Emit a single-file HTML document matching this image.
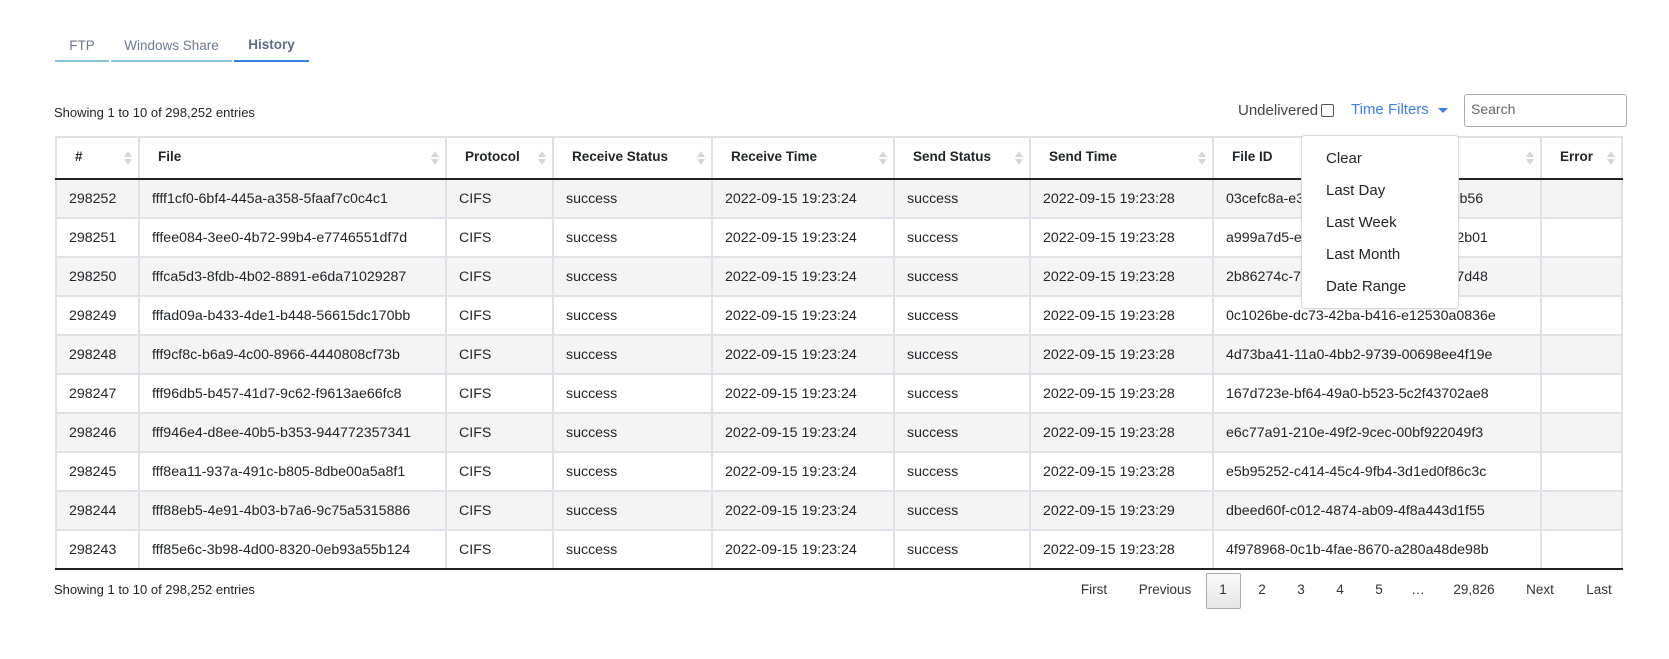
<!DOCTYPE html>
<html><head><meta charset="utf-8"><style>
*{box-sizing:border-box;margin:0;padding:0}
body{width:1669px;height:659px;background:#fff;font-family:"Liberation Sans",sans-serif;color:#212529;position:relative;overflow:hidden;font-size:13.5px}
.a{position:absolute;white-space:nowrap}
.tab{position:absolute;top:34px;height:28px;font-size:13.5px;color:#6c7a93;text-align:center;border-bottom:2px solid #86c1d8}
table{position:absolute;left:55px;top:136px;border-collapse:collapse;width:1566px;table-layout:fixed}
td,th{border:2px solid #dee2e6;height:39px;padding:0 0 0 12px;text-align:left;font-size:14.2px;white-space:nowrap;overflow:hidden}
th{height:42px;font-size:13.5px;font-weight:bold;border-bottom:2px solid #222;position:relative;padding-left:18px;padding-bottom:4px}
tbody tr:nth-child(odd) td{background:#f4f4f4}
.s{position:absolute;right:6px;top:13px;width:8px;height:16px}
.s:before{content:"";position:absolute;left:0;top:0;border-left:4px solid transparent;border-right:4px solid transparent;border-bottom:6px solid #d6d6d6}
.s:after{content:"";position:absolute;left:0;top:8px;border-left:4px solid transparent;border-right:4px solid transparent;border-top:6px solid #d6d6d6}
.dd{position:absolute;left:1301px;top:135px;width:158px;height:174px;background:#fff;border:1px solid #d8d8d8;border-radius:4px;box-shadow:0 1px 3px rgba(0,0,0,.08)}
.dd div{position:absolute;left:24px;font-size:15px;color:#212529}
.pg{position:absolute;top:582px;font-size:13.5px;color:#333;transform:translateX(-50%)}
</style></head><body>
<div class="tab" style="left:55px;width:54px;line-height:24px">FTP</div>
<div class="tab" style="left:111px;width:121px;line-height:24px">Windows Share</div>
<div class="tab" style="left:234px;width:75px;line-height:22px;font-weight:bold;color:#5e6c85;border-bottom-color:#3a7ee8">History</div>

<div class="a" style="left:54px;top:105px;font-size:13px">Showing 1 to 10 of 298,252 entries</div>
<div class="a" style="left:1238px;top:102px;font-size:15px;color:#444">Undelivered</div>
<div class="a" style="left:1321px;top:104px;width:13px;height:13px;border:1px solid #555;border-radius:2px"></div>
<div class="a" style="left:1351px;top:101px;font-size:15px;color:#3b7ff0">Time Filters</div>
<div class="a" style="left:1438px;top:108px;border-left:5px solid transparent;border-right:5px solid transparent;border-top:5px solid #3b7ff0"></div>
<div class="a" style="left:1464px;top:94px;width:163px;height:33px;border:1px solid #aaa;border-radius:3px;padding:6px 6px;font-size:14px;color:#666">Search</div>

<table>
<colgroup><col style="width:83px"><col style="width:307px"><col style="width:107px"><col style="width:159px"><col style="width:182px"><col style="width:136px"><col style="width:183px"><col style="width:328px"><col style="width:81px"></colgroup>
<thead><tr>
<th>#<span class="s"></span></th><th>File<span class="s"></span></th><th>Protocol<span class="s"></span></th><th>Receive Status<span class="s"></span></th><th>Receive Time<span class="s"></span></th><th>Send Status<span class="s"></span></th><th>Send Time<span class="s"></span></th><th>File ID<span class="s"></span></th><th>Error<span class="s"></span></th>
</tr></thead>
<tbody>
<tr><td>298252</td><td>ffff1cf0-6bf4-445a-a358-5faaf7c0c4c1</td><td>CIFS</td><td>success</td><td>2022-09-15 19:23:24</td><td>success</td><td>2022-09-15 19:23:28</td><td>03cefc8a-e3f1-4b2e-9d61-8e1c2a7f4b56</td><td></td></tr>
<tr><td>298251</td><td>fffee084-3ee0-4b72-99b4-e7746551df7d</td><td>CIFS</td><td>success</td><td>2022-09-15 19:23:24</td><td>success</td><td>2022-09-15 19:23:28</td><td>a999a7d5-ef2c-4a10-8c3b-7d4e1f9a2b01</td><td></td></tr>
<tr><td>298250</td><td>fffca5d3-8fdb-4b02-8891-e6da71029287</td><td>CIFS</td><td>success</td><td>2022-09-15 19:23:24</td><td>success</td><td>2022-09-15 19:23:28</td><td>2b86274c-70a1-4e8f-b2c6-5f3d9e1a7d48</td><td></td></tr>
<tr><td>298249</td><td>fffad09a-b433-4de1-b448-56615dc170bb</td><td>CIFS</td><td>success</td><td>2022-09-15 19:23:24</td><td>success</td><td>2022-09-15 19:23:28</td><td>0c1026be-dc73-42ba-b416-e12530a0836e</td><td></td></tr>
<tr><td>298248</td><td>fff9cf8c-b6a9-4c00-8966-4440808cf73b</td><td>CIFS</td><td>success</td><td>2022-09-15 19:23:24</td><td>success</td><td>2022-09-15 19:23:28</td><td>4d73ba41-11a0-4bb2-9739-00698ee4f19e</td><td></td></tr>
<tr><td>298247</td><td>fff96db5-b457-41d7-9c62-f9613ae66fc8</td><td>CIFS</td><td>success</td><td>2022-09-15 19:23:24</td><td>success</td><td>2022-09-15 19:23:28</td><td>167d723e-bf64-49a0-b523-5c2f43702ae8</td><td></td></tr>
<tr><td>298246</td><td>fff946e4-d8ee-40b5-b353-944772357341</td><td>CIFS</td><td>success</td><td>2022-09-15 19:23:24</td><td>success</td><td>2022-09-15 19:23:28</td><td>e6c77a91-210e-49f2-9cec-00bf922049f3</td><td></td></tr>
<tr><td>298245</td><td>fff8ea11-937a-491c-b805-8dbe00a5a8f1</td><td>CIFS</td><td>success</td><td>2022-09-15 19:23:24</td><td>success</td><td>2022-09-15 19:23:28</td><td>e5b95252-c414-45c4-9fb4-3d1ed0f86c3c</td><td></td></tr>
<tr><td>298244</td><td>fff88eb5-4e91-4b03-b7a6-9c75a5315886</td><td>CIFS</td><td>success</td><td>2022-09-15 19:23:24</td><td>success</td><td>2022-09-15 19:23:29</td><td>dbeed60f-c012-4874-ab09-4f8a443d1f55</td><td></td></tr>
<tr><td style="border-bottom:2px solid #222">298243</td><td style="border-bottom:2px solid #222">fff85e6c-3b98-4d00-8320-0eb93a55b124</td><td style="border-bottom:2px solid #222">CIFS</td><td style="border-bottom:2px solid #222">success</td><td style="border-bottom:2px solid #222">2022-09-15 19:23:24</td><td style="border-bottom:2px solid #222">success</td><td style="border-bottom:2px solid #222">2022-09-15 19:23:28</td><td style="border-bottom:2px solid #222">4f978968-0c1b-4fae-8670-a280a48de98b</td><td style="border-bottom:2px solid #222"></td></tr>
</tbody></table>

<div class="dd">
<div style="top:14px">Clear</div>
<div style="top:46px">Last Day</div>
<div style="top:78px">Last Week</div>
<div style="top:110px">Last Month</div>
<div style="top:142px">Date Range</div>
</div>

<div class="a" style="left:54px;top:582px;font-size:13px">Showing 1 to 10 of 298,252 entries</div>
<div class="a" style="left:1206px;top:573px;width:35px;height:36px;border:1px solid #aaa;border-radius:2px;background:linear-gradient(#fafafa,#e6e6e6)"></div>
<div class="pg" style="left:1094px">First</div>
<div class="pg" style="left:1165px">Previous</div>
<div class="pg" style="left:1223px">1</div>
<div class="pg" style="left:1262px">2</div>
<div class="pg" style="left:1301px">3</div>
<div class="pg" style="left:1340px">4</div>
<div class="pg" style="left:1379px">5</div>
<div class="pg" style="left:1418px">…</div>
<div class="pg" style="left:1474px">29,826</div>
<div class="pg" style="left:1540px">Next</div>
<div class="pg" style="left:1599px">Last</div>
</body></html>
